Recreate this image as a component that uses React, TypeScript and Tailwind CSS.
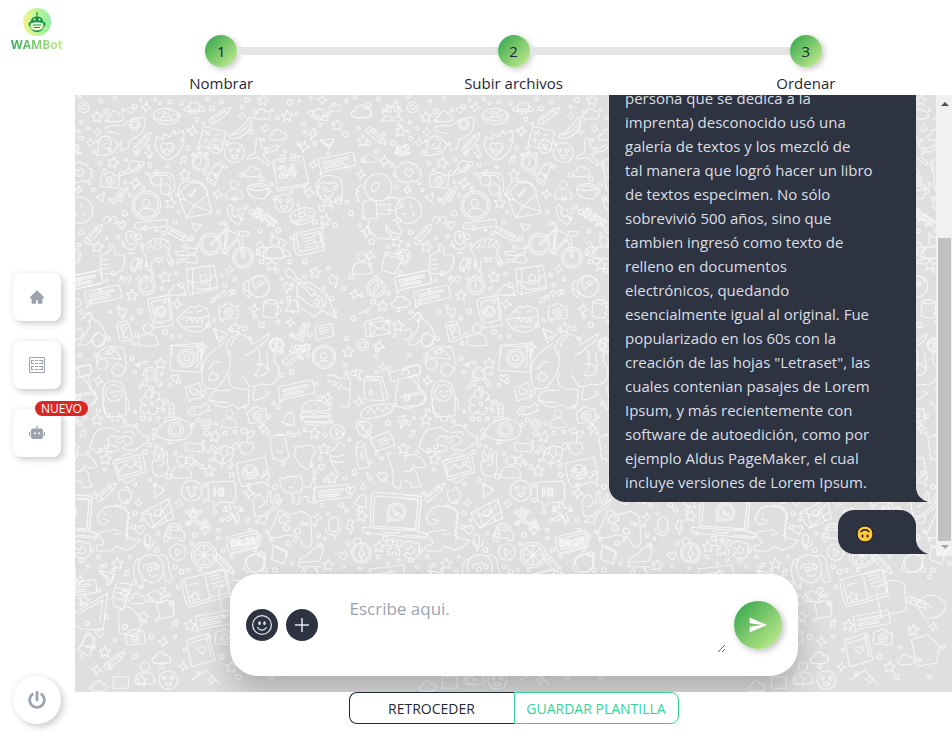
import React from "react";
import { BsEmojiSmile } from "react-icons/bs";
import { AiFillHome } from "react-icons/ai";
import { FaPowerOff } from "react-icons/fa";
import { MdSend } from "react-icons/md";

type Spot = [number, number, number];

const Dots = ({ at }: { at: Spot[] }) => (
  <>{at.map(([x, y, r], i) => <circle key={i} cx={x} cy={y} r={r} />)}</>
);
const Stars = ({ at }: { at: Spot[] }) => (
  <>{at.map(([x, y, a], i) => (
    <path key={i} transform={`translate(${x} ${y}) rotate(${a})`} d="M0-17L5-6 17-4 8 4 11 16 0 10-11 16-8 4-17-4-5-6Z" />
  ))}</>
);
const Sparks = ({ at }: { at: Spot[] }) => (
  <>{at.map(([x, y, s], i) => (
    <path key={i} transform={`translate(${x} ${y}) rotate(8) scale(${s})`} d="M0-16Q2-2 16 0Q2 2 0 16Q-2 2-16 0Q-2-2 0-16Z" />
  ))}</>
);
const Hearts = ({ at }: { at: Spot[] }) => (
  <>{at.map(([x, y, s], i) => (
    <path key={i} transform={`translate(${x} ${y}) rotate(-8) scale(${s})`} d="M0 12C-8 6-15 0-13-7C-10-14-2-12 0-6C2-12 10-14 13-7C15 0 8 6 0 12Z" />
  ))}</>
);
const Clouds = ({ at }: { at: Spot[] }) => (
  <>{at.map(([x, y, s], i) => (
    <path key={i} transform={`translate(${x} ${y}) scale(${s})`} d="M-16 14C-30 12-28-4-16-3C-14-20 6-22 9-8C18-12 28-2 23 8C20 15 8 14-16 14Z" />
  ))}</>
);
const Notes = ({ at }: { at: Spot[] }) => (
  <>{at.map(([x, y, s], i) => (
    <path key={i} transform={`translate(${x} ${y}) scale(${s})`} d="M-6 10V-10L9-14V6M-6-4L9-8M-6 10A4 4 0 1 1-10 7L-6 8M9 6A4 4 0 1 1 5 3" />
  ))}</>
);
const Cameras = ({ at }: { at: Spot[] }) => (
  <>{at.map(([x, y, a], i) => (
    <g key={i} transform={`translate(${x} ${y}) rotate(${a})`}>
      <path d="M-24-14H-14L-11-21H8L11-14H24Q29-14 28-9V18Q28 23 23 23H-23Q-28 23-28 18V-9Q-28-14-24-14Z" />
      <circle cy="4" r="13" /><circle cy="4" r="6" /><path d="M18-7h4" />
    </g>
  ))}</>
);
const Pencils = ({ at }: { at: Spot[] }) => (
  <>{at.map(([x, y, a], i) => (
    <g key={i} transform={`translate(${x} ${y}) rotate(${a})`}>
      <path d="M-34-9Q-38-9-38-5V6Q-38 9-34 9H18L38 0 18-9ZM-26-9V9M18-9V9M-22-2H16" />
    </g>
  ))}</>
);
const Watches = ({ at }: { at: Spot[] }) => (
  <>{at.map(([x, y, a], i) => (
    <g key={i} transform={`translate(${x} ${y}) rotate(${a})`}>
      <circle r="26" /><circle r="19" /><path d="M0-13V1L-7 8M-5-26V-32H5V-26M-19-19-26-24-21-30-14-25M19-19 26-24 21-30 14-25" />
    </g>
  ))}</>
);
const Faces = ({ at }: { at: Spot[] }) => (
  <>{at.map(([x, y, r], i) => (
    <g key={i} transform={`translate(${x} ${y})`}>
      <circle r={r} />
      <path d="M-11 0C-22-7-17-14-12-9C-8-15-2-8-11 0ZM11 0C2-8 8-15 12-9C17-14 22-7 11 0ZM-9 8H11Q8 19 0 18Q-7 17-9 8Z" />
    </g>
  ))}</>
);
const Bubbles = ({ at }: { at: Spot[] }) => (
  <>{at.map(([x, y, a], i) => (
    <g key={i} transform={`translate(${x} ${y}) rotate(${a})`}>
      <path d="M-50-20H50Q55-20 55-14V15Q55 20 50 20H-42L-56 28-52 14V-14Q-54-20-50-20ZM-38-9H35Q39-4 35-3H-38Q-42-7-38-9ZM-38 5H20Q24 9 20 11H-38Q-42 8-38 5Z" />
    </g>
  ))}</>
);
const People = ({ at }: { at: Spot[] }) => (
  <>{at.map(([x, y, s], i) => (
    <g key={i} transform={`translate(${x} ${y}) scale(${s})`}>
      <circle cy="-20" r="14" /><path d="M-30 30Q-32-2-8-2H8Q30 0 30 30Q0 36-30 30Z" />
    </g>
  ))}</>
);
const Bells = ({ at }: { at: Spot[] }) => (
  <>{at.map(([x, y, a], i) => (
    <path key={i} transform={`translate(${x} ${y}) rotate(${a})`} d="M-20 14Q-14 8-13-4Q-10-18-3-18A4 4 0 0 1 5-18Q13-16 14-3Q14 8 21 14ZM-5 15Q0 23 6 15" />
  ))}</>
);
const Donuts = ({ at }: { at: Spot[] }) => (
  <>{at.map(([x, y, a], i) => (
    <g key={i} transform={`translate(${x} ${y}) rotate(${a})`}>
      <ellipse rx="38" ry="24" /><ellipse cy="-4" rx="11" ry="6" />
      <path d="M-34 4Q-26 14-18 8Q-10 18 0 11Q10 18 18 9Q28 12 34 2M-24-6l5-3M-14 4l6 2M12 5l6-3M20-7l6 2M-10-15l6 1M8-15l6-1" />
    </g>
  ))}</>
);
const Planets = ({ at }: { at: Spot[] }) => (
  <>{at.map(([x, y, a], i) => (
    <g key={i} transform={`translate(${x} ${y}) rotate(${a})`}>
      <circle r="17" /><path d="M-16-5C-48 4-26 15 0 9C26 15 48 4 16-5M-16 2Q0 8 16 2" />
    </g>
  ))}</>
);
const Checks = ({ at }: { at: Spot[] }) => (
  <>{at.map(([x, y, s], i) => (
    <path key={i} transform={`translate(${x} ${y}) scale(${s})`} d="M-30 10-24 6-14 15 8-22 14-18-10 25ZM-2 12 8 18 30-24 24-27 5 8" />
  ))}</>
);

/** Line-art drawings that repeat behind the conversation. */
function Doodles() {
  return (
    <g>
      <Dots at={[[13,5,5],[78,18,5],[94,50,7],[40,100,5],[18,82,5],[95,78,4],[120,10,5],[145,45,5],[178,35,7],[197,14,4],[240,12,5],[255,25,4],[285,20,6],[320,25,5],[312,60,5],[365,72,6],[398,12,5],[410,40,7],[385,85,4],[440,22,5],[500,35,5],[518,15,7],[540,50,5],[590,45,4],[608,70,5],[645,22,8],[672,18,4],[685,85,6],[665,55,5],[707,10,5],[760,58,6],[775,30,5],[735,90,5],[690,110,4],[20,130,6],[65,138,4],[105,165,5],[13,110,4],[75,205,6],[58,170,4],[88,225,4],[140,235,7],[155,195,4],[185,175,6],[225,185,4],[219,155,5],[225,210,6],[245,230,5],[278,215,4],[340,105,4],[338,160,6],[320,135,4],[370,160,5],[360,180,4],[455,145,5],[530,110,6],[565,135,4],[575,165,6],[630,170,4],[670,145,5],[720,145,6],[760,175,4],[55,285,5],[45,265,4],[150,262,4],[165,300,5],[150,355,8],[215,235,5],[205,280,5],[285,298,5],[310,350,4],[305,298,4],[390,235,5],[425,240,4],[450,215,5],[500,240,6],[515,335,5],[530,350,7],[500,370,4],[560,252,7],[590,268,5],[600,310,6],[650,290,5],[670,330,4],[690,278,4],[740,340,8],[770,335,5],[720,380,7],[745,393,5],[780,390,7],[20,412,7],[12,450,5],[95,430,4],[130,425,5],[145,450,4],[190,425,8],[210,400,6],[200,450,5],[265,415,6],[245,405,4],[300,382,6],[350,430,6],[330,455,5],[365,455,5],[430,350,5],[480,310,6],[555,408,6],[590,420,5],[610,405,7],[650,430,5],[665,385,5],[95,556,5],[115,535,6],[140,548,5],[75,585,4],[175,520,5],[195,500,6],[215,510,5],[230,530,4],[290,500,5],[305,535,5],[320,570,7],[330,598,4],[270,620,4],[260,580,5],[440,540,5],[450,570,6],[475,590,7],[430,605,5],[480,552,5],[550,470,6],[560,500,7],[605,525,7],[620,550,5],[645,500,6],[650,570,5],[690,500,7],[690,545,5],[760,520,5],[745,580,5],[770,610,7],[780,650,5],[20,650,6],[45,620,5],[105,650,5],[130,635,4],[145,665,5],[170,670,5],[195,650,7],[185,720,6],[175,745,5],[100,730,6],[105,770,7],[270,710,7],[290,725,5],[315,725,4],[400,690,7],[418,675,5],[440,675,5],[465,705,5],[510,700,7],[525,730,5],[540,665,5],[560,690,8],[610,680,5],[650,720,6],[680,735,5],[690,690,5],[705,720,6],[620,620,5],[640,610,6]]} />
      <Dots at={[[815,18,5],[840,5,6],[880,30,7],[910,12,5],[925,45,4],[812,118,8],[850,100,5],[900,105,4],[880,145,6],[925,118,5],[955,145,7],[972,90,4],[905,170,5],[865,195,7],[950,210,6],[815,215,5],[960,240,5],[965,275,6],[815,320,5],[828,355,7],[865,365,4],[970,375,7],[855,390,5],[890,440,8],[940,455,5],[970,470,6],[885,510,5],[975,535,6],[830,545,7],[805,580,6],[860,600,5],[895,620,7],[940,595,5],[970,645,5],[835,670,7],[875,650,5],[940,680,6],[960,720,5],[815,730,6],[905,765,5]]} />
      <Stars at={[[66,65,0],[115,202,10],[564,15,5],[637,62,0],[787,90,5],[330,238,-5],[288,323,8],[68,455,10],[270,545,-8],[171,600,3],[481,698,4],[590,510,0],[721,532,8],[751,373,12],[864,137,0],[977,108,5],[966,440,12],[923,632,0],[970,692,5],[380,756,10]]} />
      <Sparks at={[[213,37,1],[68,112,.8],[45,143,.8],[500,63,.7],[352,108,1],[222,176,.8],[741,14,1],[687,155,1.1],[571,100,.8],[715,208,.9],[181,265,1.1],[428,297,1],[702,293,1.1],[10,285,.8],[463,523,.8],[307,627,1],[537,642,1],[646,683,.9],[928,198,1.1],[858,238,1],[998,285,.7],[875,410,1.1],[884,482,1],[838,598,1],[912,754,1.1]]} />
      <Hearts at={[[168,46,.8],[139,391,1],[14,234,1],[500,348,.8],[143,652,1],[1130,390,.8]]} />
      <Clouds at={[[122,66,1],[562,58,1],[610,121,1],[534,231,1],[307,587,1],[780,37,.8],[860,51,1.2],[885,191,.8],[978,622,1.1]]} />
      <Donuts at={[[273,64,5],[683,363,-14]]} />
      <Planets at={[[358,39,0],[730,58,22],[178,214,-30]]} />
      <Notes at={[[325,195,.9],[415,615,.7]]} />
      <Cameras at={[[105,254,5],[461,648,0]]} />
      <Pencils at={[[58,415,-48],[310,420,28],[203,142,-50],[437,60,-35],[905,125,40]]} />
      <Watches at={[[377,203,-5],[216,573,-10]]} />
      <Faces at={[[478,173,30],[627,325,27]]} />
      <Bubbles at={[[26,556,-12],[83,600,-12],[785,202,-12],[1013,556,-12]]} />
      <People at={[[478,285,.85],[600,458,.95],[219,720,1],[862,505,1]]} />
      <Bells at={[[653,635,8]]} />
      <Checks at={[[130,302,1],[677,710,1]]} />
      <path d="M65 182L75 130Q100 110 130 150L115 172Q100 180 65 182ZM90 98Q110 90 145 92Q165 67 208 66Q214 76 205 105Q195 123 165 135L160 160 138 167 138 140 132 150M90 98Q95 112 110 112L133 116M80 155 95 145M95 132Q112 132 108 150Q100 163 85 160" />
      <circle cx="179" cy="88" r="16" /><circle cx="179" cy="88" r="10" />
      <path d="M241 151L245 125 263 133 266 115 283 126 298 105 302 118 325 106Q332 145 315 167Q300 190 277 196Q244 178 241 151ZM277 181Q254 166 257 153Q261 139 275 148Q288 139 298 153Q299 165 277 181ZM261 158l7 11 8-10 7 11 9-15" />
      <path d="M387 94L445 108Q454 110 451 118L440 165 385 155Q370 150 373 143ZM390 107l15 14m0-14-15 14M385 136h16m-8-8v15M420 120h14M416 132h10" />
      <circle cx="423" cy="154" r="20" /><path d="M412 151h20m-18 7h18M417 146l10 17" />
      <path d="M464 118Q490 116 523 66L530 69Q535 105 500 124Q475 135 464 127ZM474 119Q505 117 527 78" />
      <path d="M544 130L553 130 562 160 590 158 605 150 612 155 603 166 564 177 568 187 586 206 580 211 550 188 515 192 520 183 540 174Z" />
      <path d="M598 196L684 184 701 264 606 281ZM604 279L610 289 697 270 700 264M594 198Q590 215 602 235M615 181h13v19h-13zM649 177h12v19h-12zM670 182v15" />
      <text x="611" y="250" fontSize="50" transform="rotate(-8 611 250)">24</text>
      <text x="961" y="184" fontSize="42" transform="rotate(-10 961 184)">42</text>
      <text x="530" y="358" fontSize="40" transform="rotate(36 530 358)">BFF</text>
      <path d="M432 201Q445 201 443 213L438 220 420 269 399 260 395 250 418 210 422 213ZM420 204 442 215M408 233 430 244M400 250 420 260M415 238q10 2 7 12" />
      <path d="M226 252Q218 235 233 233L282 234Q300 240 299 270Q301 290 291 292M234 241H275Q286 245 286 258" />
      <circle cx="244" cy="256" r="16" /><circle cx="271" cy="282" r="16" />
      <path d="M310 286Q311 270 328 259L365 257 395 282 396 294 411 355 334 368 310 300ZM316 313L331 315 357 332 398 298M357 332 334 368M357 332 411 350M331 315 316 290 345 263 382 263 397 290M340 296l5 8 15-22M349 303l14-20" />
      <circle cx="214" cy="331" r="43" /><circle cx="214" cy="331" r="36" /><circle cx="212" cy="324" r="11" /><path d="M190 357Q198 340 216 340Q237 343 242 354" />
      <path d="M181 385L272 373Q278 375 277 383L275 393 186 403Q177 401 178 394ZM194 391h2m12-2h2m12-1h2m12-1h2" />
      <path d="M466 329Q455 333 457 345Q462 379 490 388Q499 383 500 372L488 360 480 366Q470 359 470 347L476 342Z" />
      <path d="M519 274Q550 258 578 273Q582 320 550 310Q520 310 517 280ZM519 279Q549 295 578 279M580 278q17 10-3 22M531 276q20-8 38 1" />
      <circle cx="406" cy="447" r="32" /><circle cx="406" cy="447" r="25" /><circle cx="504" cy="488" r="31" /><circle cx="504" cy="488" r="24" />
      <path d="M406 447L455 397 446 386Q433 392 432 386Q440 376 455 385L460 398 450 466 494 420 493 409 523 410Q525 420 510 423L500 422 508 486 502 487 490 432 457 470 448 474 440 464 448 460 453 405 410 451M456 404 492 420M438 473 460 479" />
      <path d="M80 480Q105 474 107 461L101 450Q109 442 117 457L121 479 148 481Q152 492 147 498Q152 505 144 511Q150 520 138 525L125 536H80Q70 527 79 520Q72 512 80 508Q71 500 80 494Q74 489 80 480ZM80 494h22M80 508h22M80 521h20" />
      <path d="M154 414Q151 431 156 441Q166 455 179 442Q182 424 178 413Q165 403 154 414ZM143 437Q147 464 169 464Q188 457 186 437M169 464V475M160 475H181M166 416v13m5-12v12" />
      <path d="M215 448Q203 454 202 466L214 488 215 520Q220 530 228 520L232 496M216 445Q229 427 254 431Q280 430 286 455L278 477 295 500Q297 513 286 513L274 488M217 460q10-14 25 0M252 460q13-15 27 1M239 489Q250 492 265 487Q260 500 253 500Q243 500 239 489M230 437l-5 15m20-17-5 13m20-12-6 13m25-9-10 8" />
      <path d="M167 511L178 490Q187 488 191 498L200 522 190 520 188 506 180 529 170 527ZM184 490l16 3" />
      <path d="M302 470L337 468 342 458 367 462 363 474 341 476 334 482 304 479ZM303 496L335 491 340 482 361 480 366 491Q373 500 360 504L337 502 330 498 304 505" />
      <path d="M344 522L415 510Q423 530 428 580L350 598Q339 593 339 583L336 520ZM340 558L389 567 420 540M340 560 370 584 428 577M353 521v77M405 510v77" /><circle cx="385" cy="549" r="10" />
      <path d="M546 447Q555 430 567 455M567 455Q540 456 545 481L566 484M565 459Q580 455 590 456M611 456Q631 471 622 490Q595 495 565 488Q560 465 582 457M620 457Q635 446 631 440Q610 421 612 450M625 462Q650 469 646 484H624" />
      <path d="M657 417L740 397 749 465 671 482Q661 477 658 460ZM664 418l10 53 67-15M676 422l59-13 8 48M684 431l28-6m-26 15 27-6m-24 16 29-7m-26 16 38-8M716 419l18-3 4 25-18 4z" />
      <circle cx="552" cy="574" r="32" /><path d="M521 555Q498 561 507 578Q511 586 526 592L522 607Q502 599 505 580M538 548q21-15 39 9-22 13-37 25-13-19-2-34ZM554 557l10 9m-18-3 15 8" />
      <path d="M630 528Q645 515 656 532L667 552Q681 554 679 560L717 588Q729 598 714 603Q705 604 696 585L650 547Q633 550 630 528ZM672 563L697 562Q720 566 749 597L755 623 741 637 709 633 669 603 664 578ZM713 596Q750 605 745 632M754 594 770 632 785 670 741 645 719 665 670 635 665 600M726 611l10 11-8 9-9-10Z" />
      <path d="M225 611L281 600Q293 650 294 690L239 699Q222 645 218 618ZM229 622L280 610 287 674 242 684ZM257 606l16-3M255 687l12-3" /><circle cx="256" cy="650" r="17" /><circle cx="256" cy="650" r="12" /><path d="M249 644q3 18 14 12" />
      <path d="M305 673L347 634 358 638 370 632 397 641 404 671Q398 708 366 711Q326 710 315 686ZM313 674Q335 664 365 670L399 664M335 679l10-10 7 11 7-10 9 14 7-13 6 12 5-15M326 650l25 2m16-1 17-6M329 695h52" />
      <path d="M567 620Q590 607 609 622L604 667Q585 672 564 663ZM568 622Q588 632 608 623M606 633Q625 640 615 654Q610 661 602 654" />
      <path d="M124 686Q140 675 158 679L173 731Q155 742 136 739ZM131 693l27-7m-20 10 11 36M139 697q12-8 16 5-4 8-11 10-8-9-5-15M146 728l13-3" />
      <path d="M17 674L43 652 48 666Q86 690 92 719Q87 752 66 754 M43 671 44 697 14 746M51 742Q50 717 75 710 M0 708Q22 693 24 717Q20 730 0 735M10 749Q34 754 50 736" /><circle cx="41" cy="665" r="12" /><circle cx="71" cy="736" r="19" />
      <path d="M287 752L370 745 395 755M291 754V780M415 700L458 718 431 743ZM423 710l5 21 16-8" />
      <path d="M455 750Q464 720 495 718Q527 722 531 749L583 715 574 738 545 758Q530 780 510 779M455 750Q450 765 462 780M469 754Q471 731 490 727" /><circle cx="604" cy="750" r="22" /><circle cx="604" cy="750" r="17" /><path d="M588 738l33 25m-6-30-22 34M604 729v42" />
      <path d="M643 768L653 752 706 750 702 766 653 775ZM655 767l6-10 6 10 7-12 6 10 7-12 6 10M719 696L770 685 776 722 725 735ZM729 702l28-6m-25 14 31-6m-28 13 22-4" />
      <path d="M709 110L715 100 723 103 717 114 724 117 705 136 711 119 699 119ZM736 135L778 132 762 160ZM741 139l21 14 15-19M350 386L381 389 361 409ZM64 307L88 293 83 320ZM623 570l11-8 7 8 13-6-5 22-6-7-8 17-3-18ZM764 547l6-8 10 10 9-5-7 35-5-17-13 4Z" />
      <path d="M86 381q0-17 13-16 10 4 4 12-3 9-10 12M107 380q0-17 13-16 10 4 4 12-3 9-10 12M134 559q-1-14 10-13 10 6-5 20M154 557q-1-14 10-13 10 6-5 20M440 600q-1-14 9-13 10 6-4 18M460 598q-1-14 9-13 10 6-4 18" />
      <path d="M726 285Q721 250 755 241Q790 239 801 260L802 312Q767 331 738 312ZM733 281Q730 258 750 264L765 265Q782 259 790 274M735 276h-11l4 23 12 5M749 297Q760 319 775 294M757 291l13-2M748 322a10 10 0 1 0 20 0a10 10 0 1 0-20 0M780 318a10 10 0 1 0 20 0a10 10 0 1 0-20 0" />
      <circle cx="751" cy="282" r="5" /><circle cx="780" cy="280" r="5" />
      <path d="M918 78L930 65 921 54 939 43 934 30 952 36 962 15 969 34 980 45 968 58 982 77ZM931 66q16-9 18 5 19-2 27-14" /><circle cx="942" cy="44" r="7" /><circle cx="964" cy="42" r="7" />
      <circle cx="1013" cy="37" r="16" /><circle cx="1013" cy="37" r="7" />
      <path d="M961 228Q958 214 973 214Q978 199 991 205Q1004 195 1010 208Q1026 205 1026 218Q1045 223 1035 236Q1046 247 1030 252Q1024 265 1010 257Q995 268 985 258Q967 264 968 247Q950 239 961 228Z" />
      <circle cx="910" cy="277" r="41" /><path d="M890 288Q886 263 910 263Q920 271 901 289ZM872 283 860 270Q840 277 845 306L854 319M843 284l11 6m-8 9 12 3M866 319Q887 310 903 319L907 370 868 373Q860 350 866 319ZM925 317Q949 302 970 310L978 334Q960 350 938 345M887 375Q874 390 884 411L910 431H944Q955 420 933 408L934 390M933 390Q940 415 975 418L982 404Q967 398 963 376L948 377" />
      <path d="M905 328h40v29h-40zM912 335h4m8 0h4m7 0h4m-20 9h4m7 0h4m8 0h4" />
      <circle cx="1001" cy="346" r="39" /><path d="M981 324q10 5 1 13m22-10q9 3 3 10m-26 20q12-4 12 6m21-12q6 10-3 11" />
      <path d="M932 470L987 484 958 537 919 525ZM935 481 983 492M972 472Q982 458 1000 466Q1010 490 990 508L977 503" /><circle cx="985" cy="484" r="13" />
      <circle cx="903" cy="579" r="28" /><circle cx="903" cy="579" r="21" /><path d="M895 592L899 573 912 567 908 585ZM898 550V542H909V550" />
      <path d="M868 681L921 666 925 678M868 681 874 725 885 724M884 684L940 676 945 715 887 725ZM884 684 915 703 940 676M887 725 907 698M922 697 945 715M854 657 890 635" />
      <circle cx="863" cy="750" r="17" /><circle cx="863" cy="750" r="9" />
      <g transform="translate(0 765)">
        <Dots at={[[15,15,5],[65,15,6],[95,8,5],[170,25,6],[190,45,5],[210,100,7],[195,110,5],[230,115,6],[260,70,5],[285,105,5],[310,95,6],[275,155,6],[265,180,5],[205,205,7],[225,207,5],[250,205,5],[180,185,4],[150,215,5],[185,225,4],[100,195,5],[70,180,6],[15,220,6],[30,205,5],[40,305,5],[75,300,5],[95,290,6],[105,305,4],[225,285,5],[210,305,6],[245,290,5],[285,275,6],[300,310,5],[280,380,7],[225,390,6],[240,405,5],[180,402,5],[90,358,5],[370,210,6],[355,225,5],[395,250,7],[385,275,5],[400,305,5],[380,350,6],[365,340,5],[390,405,6],[465,350,5],[470,375,7],[450,250,6],[425,220,5],[480,245,5],[510,170,5],[580,200,6],[595,160,5],[610,170,6],[580,250,5],[560,225,5],[640,250,5],[655,255,6],[670,250,5],[690,240,5],[750,255,6],[680,205,4],[770,215,5],[735,145,7],[725,100,4],[765,160,5],[700,15,6],[680,25,5],[650,65,7],[620,75,5],[620,5,5],[740,350,8],[720,365,6],[710,345,5],[750,390,5],[735,325,5],[390,450,6],[420,485,5],[440,510,6],[430,540,5],[450,480,5],[390,550,5],[360,555,7],[340,520,6],[250,550,5],[200,510,4],[180,490,6],[175,530,6],[155,455,5],[60,430,5],[50,600,6],[70,620,5],[40,650,5],[20,630,7],[90,645,5],[80,650,5],[115,660,5],[220,590,5],[245,600,7],[165,620,4],[280,555,7],[350,580,5],[300,650,6],[320,665,7],[340,660,5],[375,660,5],[430,565,5],[445,600,6],[470,620,5],[540,600,5],[555,615,4],[555,560,6],[575,545,5],[590,570,5],[570,660,7],[600,660,7],[590,680,6],[650,640,5],[640,580,7],[660,570,5],[730,555,6],[750,565,5],[735,585,6],[720,525,5],[740,465,5],[760,490,5],[520,510,6],[525,540,5],[500,480,5],[545,370,5],[570,370,6],[600,410,7],[520,405,5],[70,720,6],[20,760,6],[100,700,5],[175,700,6],[200,710,5],[230,750,5],[310,710,6],[290,760,7],[280,735,5],[95,800,6],[35,820,6],[150,830,7],[245,810,5],[120,870,5],[55,890,6],[230,860,7],[300,860,5],[20,920,5],[180,920,7],[105,950,6],[260,950,6],[330,900,5],[400,860,6],[440,920,7],[500,890,5],[370,970,5],[490,980,7],[560,930,5],[590,980,6],[630,890,5]]} />
        <Stars at={[[256,40,0],[66,208,0],[92,326,8],[420,259,12],[403,361,0],[346,331,20],[127,641,0],[719,249,5],[747,296,0],[771,384,0],[760,645,5],[28,750,8],[205,800,8],[90,905,0],[345,825,8],[540,840,4],[200,990,5],[470,950,4]]} />
        <Sparks at={[[70,92,1],[757,142,1],[565,235,1],[190,458,.8],[312,461,.8],[522,429,1.1],[728,502,.8],[15,690,.9],[150,730,1],[265,875,1],[65,960,1],[325,950,.9],[600,830,.9],[410,990,.8]]} />
        <Hearts at={[[300,85,.9],[195,540,1.1],[135,272,.8],[75,850,1],[380,900,.9]]} />
        <Clouds at={[[188,747,1],[260,925,1.1],[520,930,1],[72,1010,1]]} />
        <Notes at={[[25,250,.8],[155,669,.8],[300,820,.8]]} />
        <Cameras at={[[546,193,-12],[180,860,-8],[450,860,6]]} />
        <Pencils at={[[95,425,-42],[450,645,45],[120,930,-40],[560,760,20]]} />
        <Faces at={[[350,422,31],[525,366,22],[280,990,28]]} />
        <Bubbles at={[[663,120,-12],[770,428,-6],[10,715,-8],[415,810,-10]]} />
        <People at={[[320,352,1],[463,208,.8],[210,970,1]]} />
        <Bells at={[[642,208,15],[40,875,10]]} />
        <circle cx="335" cy="24" r="27" /><circle cx="335" cy="24" r="20" /><circle cx="335" cy="24" r="9" />
        <path d="M289-14L383-8 378 67 285 61ZM368 3 370 45 360 54M378-5V30" />
        <circle cx="82" cy="43" r="17" /><circle cx="129" cy="60" r="19" /><path d="M65 40Q60 5 97-9L140-10Q155 9 153 62M70 20 138 28M103-10Q130 5 139 28" />
        <path d="M0 50L45 44Q54 62 45 75L5 83M17 81Q38 92 45 118L60 125 66 144 47 166 0 170M0 135l45-9M5 130v15l12 1v-15" />
        <path d="M85 165Q79 113 93 100Q120 81 143 105Q156 131 153 197L96 201ZM112 198 111 213 128 214 132 194 147 211M151 139q12 5 11 42M88 144q-8 25 2 48" /><circle cx="117" cy="129" r="25" /><path d="M106 128q5-9 9 0m8-2q5-8 10 0m-20 11q8 9 14-2" />
        <circle cx="225" cy="72" r="20" /><circle cx="225" cy="72" r="13" /><path d="M239 88L245 83 260 104 252 111ZM194 43q10-15 14 0M207 36q13-9 9 10M179 44q14-6 13 6M173 68q7-12 12 1-5 8-12-1" />
        <path d="M229 144A13 13 0 1 1 245 151A13 13 0 1 1 243 171A13 13 0 1 1 222 178A13 13 0 1 1 214 165A13 13 0 1 1 220 145A13 13 0 1 1 229 144Z" /><circle cx="231" cy="161" r="5" />
        <path d="M331 112L373 99 383 143 353 147 342 153 338 143ZM344 118q10-9 16 2 11-4 9 7l-13 8q-12-7-12-17ZM375 127l14-8 6 7-10 12-13-3" />
        <path d="M338 189Q352 160 377 173L390 160 402 166 397 178 405 183 385 186Q367 202 338 189ZM349 181h2m4 8q7-9 3-14" />
        <path d="M240 250Q259 211 301 208Q350 208 351 243Q345 269 303 271Q260 273 240 250ZM271 215V202H314V214M283 202V167Q290 154 297 167V202M282 177h15m-15 12h15M235 235q15 0 5 16 7 15-8 19-3-12 6-18-12-5-3-17Z" /><circle cx="303" cy="239" r="22" /><circle cx="303" cy="239" r="14" />
        <circle cx="395" cy="222" r="14" /><circle cx="395" cy="222" r="6" />
        <path d="M45 291Q57 241 79 236L108 232 133 245M45 291 70 310 83 302 108 306 127 302Q134 292 122 289L102 284Q92 263 109 258L131 260M139 232Q161 218 181 231L202 255 218 259Q225 280 208 282L178 303 148 298Q138 292 150 286L166 283Q181 266 158 257L135 261M142 247 173 245 178 256" />
        <path d="M239 328Q231 300 239 301L250 323M253 323Q255 295 263 295L263 323M266 323Q268 300 278 307L277 340M239 328Q225 340 234 365Q246 388 270 374Q286 363 277 340M239 336q24-18 29 1-4 9-18 9" />
        <path d="M115 334L200 312Q207 320 212 366L132 391ZM124 341L193 322 202 361 133 380ZM130 367l22-25 15 13 12-12 21 13M120 332l40-24 14 7M145 391l13 9 24-17" /><circle cx="183" cy="338" r="5" />
        <path d="M-50 342Q-40 315-7 318L25 313Q60 320 65 350Q54 358 35 350M8 319Q-11 340 0 364Q24 369 30 345M30 358Q44 370 42 391L53 410 23 412 18 395-25 391" />
        <path d="M331 278L385 283 383 306 333 302ZM384 290l5 1-1 9-5-1" />
        <path d="M423 304Q443 279 471 294Q482 310 466 332Q444 349 420 331Q417 314 423 304ZM472 292l9-14 11 2-4 13-13 7M427 296l-15-10-6 7 14 11M417 325l-12 2v8l13-3M440 338l1 16m22-20 13 11M439 294l-4 17 12 9 11-6-3-16M447 320l-5 17m16-23 14-1M435 311l-14-2" />
        <path d="M500 277A21 21 0 1 0 530 277Q521 286 516 277ZM518 279V247Q500 256 496 239L507 234Q522 238 518 247L538 243Q535 263 518 265" />
        <path d="M598 257L585 264 594 328 603 325 610 332 634 328 642 321 629 256ZM598 257Q616 250 629 256M620 330l1 17 8-2-1-18M604 290h2m16 1h2m-18 13q12 8 16-1" />
        <path d="M658 290L668 288Q682 297 689 284L716 289Q726 300 714 317Q702 335 710 350L695 358 675 345 656 314 664 305ZM763 305l19-10 9-20 19 13M763 313Q770 326 805 315M763 320Q773 343 805 335M768 333 790 374" />
        <path d="M485 340L571 322 583 383 576 391 582 407 561 395 502 411Q486 382 485 340ZM514 360h3m15-4h3m-24 13 20-3q-5 16-14 10M555 380l5 5 10-11" />
        <path d="M399 403Q401 395 409 396L475 394Q482 397 482 408V447Q480 457 470 457H435L417 474 416 457 401 453Z" /><text x="414" y="438" fontSize="34">Hi</text>
        <path d="M236 400L241 443 268 420 255 411ZM130 433Q133 416 148 420L151 411 161 414 158 420Q172 425 170 437Q164 463 143 460Q131 448 130 433Z" />
        <path d="M614 384L628 387 642 378 662 382 677 374 681 394Q689 415 672 427L640 430Q614 420 614 384ZM688 410Q705 415 708 405L717 378Q722 373 720 425L712 457 702 458 698 439 673 443 671 463 652 461 657 443 647 430M631 400h2m27-3h2m-20 14q8 7 13-2" />
        <path d="M541 499Q529 456 539 440L555 432 570 453Q564 471 550 470M575 463 579 430Q585 420 588 425L588 459M592 462 606 434Q614 430 612 440L603 463M603 463 621 446 612 469 579 492 571 520 540 517ZM540 499 579 498" />
        <path d="M200 489L282 446 296 505 229 534Q210 515 200 489ZM205 489 250 498 286 454M219 475 237 531M253 461 276 514M229 533 290 484" /><circle cx="249" cy="489" r="10" />
        <path d="M474 492Q442 480 451 467L469 477Q460 460 473 455L481 476Q501 464 503 477L485 491Q500 514 487 519L476 496Q458 522 450 507ZM473 497Q481 508 485 524" />
        <text x="330" y="520" fontSize="50">文</text><text x="374" y="539" fontSize="46">A</text>
        <path d="M267 555L276 542Q276 520 300 521Q322 522 319 542L328 548 328 571 315 572 309 563 283 565 278 575 268 571ZM281 541H312L308 530H286Z" />
        <path d="M455 561L545 540Q555 561 555 585L471 609Q459 605 457 592ZM464 568 543 549 548 581 472 600ZM466 609 487 610 551 590" /><text x="470" y="592" fontSize="29" transform="rotate(-10 470 592)">09:28</text>
        <path d="M610 490Q605 479 620 480L641 495 680 483 707 500 711 578Q701 600 686 586L670 560 638 555 603 564Q580 565 581 552ZM620 500l7-8 7 9 10-1 1 10-9 4-5 9-8-6-10 1-1-9z" /><circle cx="667" cy="543" r="9" /><circle cx="634" cy="533" r="9" /><circle cx="683" cy="520" r="5" /><circle cx="695" cy="523" r="4" />
        <path d="M764 510Q756 530 765 542Q783 552 789 535Q795 510 785 503Q769 497 764 510ZM753 532Q750 555 779 556Q799 546 797 534M780 556v11" />
        <path d="M76 486Q88 463 122 470Q151 470 161 494L154 548Q153 568 196 570L178 590 150 600 123 588 109 603H69Q58 593 67 585Q83 590 87 574Q60 552 77 546L101 542M76 486Q61 502 74 519Q91 530 102 512L85 507M105 544q14-9 23 0M114 551q13 5 22-3M121 470l3-8 7 8 7-6 6 10 9-2 1 11 10 5-7 9 8 8-9 7 7 8-8 7 6 7-8 8 6 7-8 6 7 7-4 9" /><path d="M87 493h6" />
        <circle cx="308" cy="606" r="25" /><path d="M302 595L318 606 303 619Z" /><circle cx="387" cy="615" r="38" /><circle cx="387" cy="615" r="30" /><path d="M387 587v56m-28-28h56m-48-20 41 41m0-41-41 41" />
        <path d="M209 563q0-10 10-10l8 8-2 20q-9 9-14 0ZM206 573q2 22 17 20 16-5 13-19M220 594v9" />
        <path d="M190 655Q188 620 219 615Q259 610 264 646Q269 693 231 698Q199 694 190 655ZM196 629 186 628Q170 642 178 681L192 714 205 712 201 690M249 617 264 615Q283 622 281 651L293 690Q282 702 269 691L267 670M205 655Q202 641 224 643Q245 634 251 650M224 675q15 10 22-4" /><circle cx="224" cy="658" r="7" /><circle cx="245" cy="651" r="7" />
        <path d="M506 658L514 625 558 605 568 608 566 650 549 666 517 666Z" /><circle cx="542" cy="639" r="28" /><path d="M565 612q12 2 4 18M595 585L636 602 627 642 590 628ZM601 592l36 16m-11-6q17 9 8 20" />
        <path d="M671 650L678 622Q699 620 713 598L743 582 744 602 734 633 674 637M674 650H738M686 653 672 690M695 653 679 699M723 653 737 690M718 653 744 690" />
        <path d="M70 660L119 672 107 702ZM70 660l37 30 11-18" />
        <path d="M320 690L388 672 440 657Q454 662 455 668L466 737 346 770Q334 766 328 740ZM390 672l16 80M329 692l17 70 57-16M399 672l48-12 14 68-54 14M403 680l35-8m-31 18 34-9m-30 20 36-9m-31 20 31-8M342 704l28-5M357 725l5 7 10-1-4 9 6 8-12-1-6 8-2-10-9-4 9-5z" />
        <path d="M123 703L156 699 168 706 164 720 145 777 119 770 111 747ZM123 713l39 9m-40 6 35 8m-38 8 35 8M227 728q14-14 22 1 8-22 20-14l3 5-17 15 21 2-20 9 5 12-23-4-20 2 7-16-12-4Z" />
        <path d="M0 435L53 440 42 544 66 552 67 560 0 555M0 446L43 450 34 538 0 540" />
        <path d="M15 600Q-10 593 3 575Q20 570 34 581L43 577Q50 600 44 616Q24 638 0 615L8 607Q21 617 32 606Q32 591 18 588Z" />
        <path d="M385 105Q370 45 405 10L445-20M385 105Q395 122 425 115L450 85Q474 50 462 0M405 150Q430 160 459 157M466 72Q452 95 477 115L522 119 520 164 489 177Q478 157 455 173L427 168 402 151Q400 131 425 122L466 120M503 75 525 112 565 102Q603 110 611 79L612 50Q592 40 600 10M540 110Q532 140 534 150Q563 150 583 130L571 122M402 58q15-31 33-20M400 85q17 18 30-5L412 65ZM550 0Q564 50 540 75Q560 85 580 61L575 8M545 45q20-10 31 11" />
        <path d="M620 35Q648 14 696-20L704-10 640 49ZM630 44l60-47" /><circle cx="747" cy="21" r="35" /><circle cx="747" cy="21" r="29" /><circle cx="746" cy="17" r="9" /><path d="M728 42q15-19 33-5" />
        <path d="M681 184Q681 149 720 151Q760 155 764 181ZM678 190Q696 182 711 191L730 187 764 191 768 197 678 199ZM683 202H764L763 216 680 214ZM690 218H757L747 228 691 224M704 169h3m15-7h3m8 12h3m9-8h3" />
        <circle cx="787" cy="245" r="21" /><path d="M781 235L797 243 789 248 786 258Z" />
        <path d="M757 75q20-5 35 11M755 92l27 4M770 108l20-10M790 120l10-18" />
        <path d="M0 788L98 730 85 835Q15 848-12 815ZM14 790l70-40-10 65M245 760l32-10 16 12 4 35-42 10ZM335 870L400 850 420 930 350 950ZM345 880l50-16 14 58M10 900L38 845 61 865 43 920Z" />
        <path d="M130 790q26-40 55 0l20 20-20 50-51-10ZM350 990l45-30 38 40M430 720Q480 670 515 705L520 780 445 800ZM550 760Q590 710 640 760Q635 810 573 804ZM535 870l50-17 35 36-10 50-57 10ZM115 980h45v35h-45z" />
      </g>
      <g transform="translate(795 765)">
        <Dots at={[[15,45,5],[40,70,7],[110,20,5],[145,55,6],[20,65,5],[110,65,5],[60,220,5],[145,220,7],[165,165,5],[10,250,4],[28,270,5],[75,260,5],[90,335,6],[110,310,5],[125,325,5],[135,390,5],[15,385,6],[20,480,6],[55,480,5],[5,465,7],[85,550,5],[25,580,6],[135,565,7],[160,570,5],[115,620,6],[175,630,5],[145,640,5],[10,650,5],[60,655,4],[5,700,6],[110,690,6],[150,730,5],[20,790,5],[80,845,6]]} />
        <Stars at={[[190,295,0],[66,498,10],[117,590,0],[25,5,0],[70,720,4]]} />
        <Sparks at={[[57,156,1],[128,52,.8],[150,675,1]]} />
        <Hearts at={[[127,380,1.1],[32,422,1],[10,618,1]]} />
        <Bells at={[[64,454,18]]} />
        <path d="M71 91L80 79 126 80 144 143 133 152 75 149ZM71 91H120L131 152M80 82 120 91M92 120q8 6 3 17-12-3-3-17ZM0 85H26L32 92 27 170H0M8 75h17v10M8 115q20-3 20 8" />
        <path d="M147 68L235 44Q243 56 240 71L154 96ZM175 93Q163 137 168 168L200 177 251 161 258 147 240 120 235 87 230 76M183 141 253 130M194 134v18l12-2v-16M188 74a10 10 0 1 1 16 0" />
        <path d="M63 190Q66 170 115 164Q157 154 160 174Q154 195 112 201Q59 215 63 190ZM82 190l10-16 11 16 12-19 12 15 12-18 9 12" />
        <path d="M49 215Q86 211 94 224Q96 249 82 258Q48 261 49 215ZM57 222l38 44M70 238v-15m8 25 9-8M90 266L149 244 165 285 109 304ZM114 272l24-9m-22 16 32-11m-28 19 25-9" />
        <path d="M154 310Q140 303 144 320Q155 345 160 370L158 405Q165 416 180 414L184 392" />
        <path d="M47 293L55 276Q67 270 74 287L87 350 56 356ZM49 294l25-5M66 306q12 15 1 20-11-5-1-20M175 202l22-6-10 15 14-1-20 26 4-20h-11ZM45 60l22 2-11 10 6 17Q43 78 45 60Z" />
        <path d="M94 435Q95 426 106 427L237 437Q245 438 244 445L235 544 90 533ZM104 438L235 447 227 536 98 528ZM90 533 68 532Q66 544 75 548L255 566 260 551 235 544M130 542l6 5 37 3 5-6" /><circle cx="169" cy="486" r="28" /><circle cx="169" cy="486" r="22" /><path d="M158 476q5 27 24 19l-4-7-8 3-6-12M145 500l-4 14 13-3" />
        <circle cx="64" cy="609" r="30" /><circle cx="64" cy="609" r="24" /><path d="M57 611L65 591 72 609 64 627ZM46 584A11 11 0 1 1 62 579" />
        <path d="M141 570h18v13h13v-13h14v18h-15v9h8v17h-12v-7h-10v7h-12v-18h9v-8h-13z" />
        <path d="M43 377q15-14 0-20-14 11 0 20M70 400q12 15-1 20-13-5 1-20M80 367q18 14 14 25-15-3-14-25M27 510l14 2-8 18 8 1-10 23-3-17-9-2Z" />
        <path d="M88 657L190 645 196 702 100 710ZM105 672l60-8m-57 20 70-10" />
      </g>
    </g>
  );
}

function Wallpaper() {
  return (
    <svg className="absolute inset-0 h-full w-full" aria-hidden="true">
      <defs>
        <pattern id="doodles" width="329" height="640" patternUnits="userSpaceOnUse">
          <g
            transform="scale(0.33333)"
            fill="none"
            stroke="#f6f6f6"
            strokeWidth="3.2"
            strokeLinejoin="round"
            strokeLinecap="round"
            fontFamily="Liberation Sans, Noto Sans CJK SC, sans-serif"
            fontWeight="bold"
          >
            <Doodles />
            <g transform="translate(-987 0)"><Doodles /></g>
          </g>
        </pattern>
      </defs>
      <rect width="100%" height="100%" fill="url(#doodles)" />
    </svg>
  );
}

function Logo() {
  return (
    <a href="#" className="flex flex-col items-center">
      <svg width="28" height="28" viewBox="0 0 28 28" aria-hidden="true">
        <defs>
          <linearGradient id="disc">
            <stop offset="0" stopColor="#f2f68c" />
            <stop offset="1" stopColor="#8cf0a4" />
          </linearGradient>
        </defs>
        <circle cx="14" cy="14" r="14" fill="url(#disc)" />
        <path d="M14 10V6" stroke="#159447" strokeWidth="1" />
        <circle cx="14" cy="5.500" r="1" fill="#159447" />
        <path d="M8 13.500C8 10 10.500 8.500 14 8.500S20 10 20 13.500Q23 14 22.500 17L20 20Q19 24 14 24T8 20L5.500 17Q5 14 8 13.500Z" fill="#159447" />
        <path d="M7.500 15.500Q14 13 20.500 15.500Q21 22 14 22.500T7.500 15.500Z" fill="#edfbd5" />
        <path d="M10 17h8M11 19.500h6" stroke="#159447" />
        <circle cx="11.500" cy="11.500" r="1" fill="#fff" /><circle cx="16.500" cy="11.500" r="1" fill="#fff" />
      </svg>
      <span className="bg-linear-to-r from-[#28a855] to-[#c4ee90] bg-clip-text text-[12px] leading-[18px] font-bold text-transparent">
        WAMBot
      </span>
    </a>
  );
}

const tile =
  "flex size-12 items-center justify-center rounded-lg bg-white text-[#9ca3af] shadow-[3px_3px_6px_#cfcfcf,-2px_-2px_6px_#f6f6f6]";

function Sidebar() {
  return (
    <aside className="relative z-10 flex w-[75px] shrink-0 flex-col items-center justify-between pt-2 pr-px pb-[15px]">
      <Logo />
      <nav className="flex flex-col gap-5">
        <button aria-label="Inicio" className={tile}><AiFillHome size={16} /></button>
        <button aria-label="Plantillas" className={tile}>
          <svg width="16" height="16" viewBox="0 0 16 16" fill="none" stroke="currentColor">
            <path d="M.5.500h15v15H.5z" />
            <path d="M2 3.500h12M2 6.500h12M2 9.500h12M2 12.500h12" strokeDasharray="3 1" />
            <path d="M2.500 3v4M13.500 3v4M2.500 9v4M13.500 9v4" />
          </svg>
        </button>
        <button aria-label="Bots, nuevo" className={`${tile} relative`}>
          <svg width="16" height="16" viewBox="0 0 16 16" fill="currentColor">
            <path d="M7.400 1h1.200v2.500H12a2 2 0 0 1 2 2V12a2 2 0 0 1-2 2H4a2 2 0 0 1-2-2V5.500a2 2 0 0 1 2-2h3.400zM0 7h1.200v4H0zM14.800 7H16v4h-1.200z" />
            <path d="M5 7.500h1.800v1.800H5zM9.200 7.500H11v1.800H9.200z" fill="#fff" />
          </svg>
          <span className="absolute -top-2 left-[22px] rounded-full bg-[#dc2626] px-1.5 text-[12px] leading-[15px] text-white">NUEVO</span>
        </button>
      </nav>
      <button aria-label="Salir" className="flex size-12 items-center justify-center rounded-full bg-white text-[#9ca3af] shadow-[3px_3px_6px_#cfcfcf,-2px_-2px_6px_#f6f6f6]">
        <FaPowerOff size={18} />
      </button>
    </aside>
  );
}

function Steps() {
  const steps = ["Nombrar", "Subir archivos", "Ordenar"];
  return (
    <ol className="grid h-[95px] shrink-0 grid-cols-3 pt-[35px]">
      {steps.map((label, i) => (
        <li key={label} className="flex flex-col items-center">
          <div className="flex w-full items-center">
            <span className={`h-2 flex-1 ${i > 0 ? "bg-[#e4e6e5]" : ""}`} />
            <span className="flex size-8 items-center justify-center rounded-full bg-linear-to-br from-[#16a34a] to-[#c8f092] text-[15px] shadow-[2px_2px_6px_#c4c4c4]">
              {i + 1}
            </span>
            <span className={`h-2 flex-1 ${i < 2 ? "bg-[#e4e6e5]" : ""}`} />
          </div>
          <span className="mt-1 text-[15px] leading-6">{label}</span>
        </li>
      ))}
    </ol>
  );
}

function Tail() {
  return (
    <svg className="absolute -right-3 bottom-0" width="13" height="13" viewBox="0 0 13 13" aria-hidden="true">
      <path d="M0 0H1Q3 10 13 13H0Z" fill="#2d3340" />
    </svg>
  );
}

const lines = [
  "persona que se dedica a la",
  "imprenta) desconocido usó una",
  "galería de textos y los mezcló de",
  "tal manera que logró hacer un libro",
  "de textos especimen. No sólo",
  "sobrevivió 500 años, sino que",
  "tambien ingresó como texto de",
  "relleno en documentos",
  "electrónicos, quedando",
  "esencialmente igual al original. Fue",
  "popularizado en los 60s con la",
  "creación de las hojas \"Letraset\", las",
  "cuales contenian pasajes de Lorem",
  "Ipsum, y más recientemente con",
  "software de autoedición, como por",
  "ejemplo Aldus PageMaker, el cual",
  "incluye versiones de Lorem Ipsum.",
];

function Messages() {
  return (
    <div className="relative flex min-h-0 flex-1">
      <div className="flex flex-1 flex-col items-end justify-end gap-2 overflow-hidden pr-5 pb-0.5">
        <div className="relative w-[307px] shrink-0 rounded-2xl rounded-br-none bg-[#2d3340] px-4 py-2 text-[15px] leading-6 text-[#dcdfe5]">
          <p>{lines.map((l) => <span key={l} className="block whitespace-nowrap">{l}</span>)}</p>
          <Tail />
        </div>
        <div className="relative flex h-11 w-[78px] shrink-0 items-center rounded-2xl rounded-br-none bg-[#2d3340] pt-1 pl-[18px]">
          <svg width="18" height="18" viewBox="0 0 18 18" role="img" aria-label="🙃">
            <circle cx="9" cy="9" r="8" fill="#ffc83d" stroke="#171717" />
            <path d="M4.500 7Q9 2.500 13.500 7" fill="none" stroke="#171717" strokeWidth="1.200" />
            <ellipse cx="6.500" cy="11" rx="1" ry="1.600" fill="#171717" /><ellipse cx="11.500" cy="11" rx="1" ry="1.600" fill="#171717" />
          </svg>
          <Tail />
        </div>
      </div>
      <div className="flex w-4 shrink-0 flex-col items-center bg-[#f1f1f1] py-1.5 pr-px pl-0.5" aria-hidden="true">
        <svg width="8" height="5"><path d="M0 5 4 1l4 4z" fill="#505050" /></svg>
        <span className="flex-[132]" />
        <span className="w-full flex-[303] bg-[#c1c1c1]" />
        <span className="h-1" />
        <svg width="8" height="5"><path d="M0 0 4 4l4-4z" fill="#a3a3a3" /></svg>
      </div>
    </div>
  );
}

function Composer() {
  return (
    <form className="relative mx-auto mt-[18px] mb-4 flex h-[102px] w-[568px] max-w-full shrink-0 items-center rounded-[28px] bg-white px-4 shadow-[0_16px_30px_#00000038]" onSubmit={(e) => e.preventDefault()}>
      <button type="button" aria-label="Emoji" className="mr-2 flex size-8 shrink-0 items-center justify-center rounded-full bg-[#2d3340] text-[#e5e7eb]">
        <BsEmojiSmile size={20} />
      </button>
      <button type="button" aria-label="Adjuntar" className="flex size-8 shrink-0 items-center justify-center rounded-full bg-[#2d3340] text-[#e5e7eb]">
        <svg width="14" height="14" stroke="currentColor" strokeWidth="1.500"><path d="M7 0v14M0 7h14" /></svg>
      </button>
      <textarea aria-label="Mensaje" placeholder="Escribe aqui." className="mr-2 ml-4 h-14 min-w-0 flex-1 resize px-4 text-[17px] leading-6 outline-none placeholder:text-[#9ca3af]" />
      <button aria-label="Enviar" className="flex size-12 shrink-0 items-center justify-center rounded-full bg-linear-to-br from-[#16a34a] to-[#c8f092] text-white shadow-[2px_2px_6px_#bdbdbd]">
        <MdSend size={20} />
      </button>
    </form>
  );
}

export default function App() {
  return (
    <div className="flex h-screen bg-white font-['Open_Sans','Noto_Sans_CJK_SC',sans-serif] text-[#1f2937]">
      <Sidebar />
      <main className="flex min-w-0 flex-1 flex-col">
        <Steps />
        <section className="relative flex min-h-0 flex-1 flex-col overflow-hidden bg-[#dfdfdf]">
          <Wallpaper />
          <Messages />
          <Composer />
        </section>
        <div className="flex h-[47px] shrink-0 items-start justify-center">
          <button className="h-8 w-[165px] rounded-l-lg border border-r-0 border-[#1f2937] text-[14px] font-medium">RETROCEDER</button>
          <button className="h-8 w-[165px] rounded-r-lg border border-[#36d399] text-[14px] font-medium text-[#36d399]">GUARDAR PLANTILLA</button>
        </div>
      </main>
    </div>
  );
}
